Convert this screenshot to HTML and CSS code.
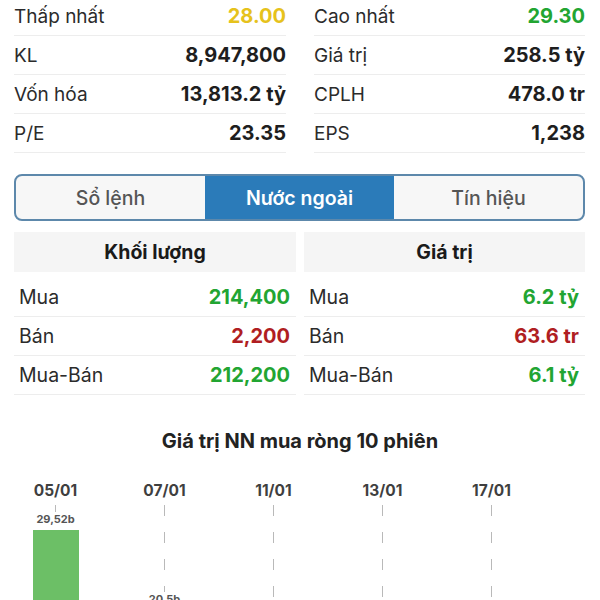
FILE: index.html
```html
<!DOCTYPE html>
<html lang="vi">
<head>
<meta charset="utf-8">
<link rel="stylesheet" href="styles.css">
</head>
<body>
<div class="page">
  <section class="stats">
    <div class="stat"><span class="lbl">Thấp nhất</span><span class="val yellow">28.00</span></div>
    <div class="stat"><span class="lbl">Cao nhất</span><span class="val green">29.30</span></div>
    <div class="stat"><span class="lbl">KL</span><span class="val">8,947,800</span></div>
    <div class="stat"><span class="lbl">Giá trị</span><span class="val">258.5 tỷ</span></div>
    <div class="stat"><span class="lbl">Vốn hóa</span><span class="val">13,813.2 tỷ</span></div>
    <div class="stat"><span class="lbl">CPLH</span><span class="val">478.0 tr</span></div>
    <div class="stat"><span class="lbl">P/E</span><span class="val">23.35</span></div>
    <div class="stat"><span class="lbl">EPS</span><span class="val">1,238</span></div>
  </section>

  <nav class="tabs">
    <div class="tab">Sổ lệnh</div>
    <div class="tab active">Nước ngoài</div>
    <div class="tab">Tín hiệu</div>
  </nav>

  <section class="tables">
    <div class="tbl">
      <div class="thead">Khối lượng</div>
      <div class="trow"><span class="lbl">Mua</span><span class="val green">214,400</span></div>
      <div class="trow"><span class="lbl">Bán</span><span class="val red">2,200</span></div>
      <div class="trow"><span class="lbl">Mua-Bán</span><span class="val green">212,200</span></div>
    </div>
    <div class="tbl">
      <div class="thead">Giá trị</div>
      <div class="trow"><span class="lbl">Mua</span><span class="val green">6.2 tỷ</span></div>
      <div class="trow"><span class="lbl">Bán</span><span class="val red">63.6 tr</span></div>
      <div class="trow"><span class="lbl">Mua-Bán</span><span class="val green">6.1 tỷ</span></div>
    </div>
  </section>

  <h2 class="chart-title">Giá trị NN mua ròng 10 phiên</h2>

  <section class="chart">
    <div class="col">
      <div class="date">05/01</div>
      <div class="plot">
        <div class="bar-group" style="margin-top:7px">
          <div class="bar-lbl">29,52b</div>
          <div class="bar" style="height:100px"></div>
        </div>
      </div>
    </div>
    <div class="col">
      <div class="date">07/01</div>
      <div class="plot">
        <div class="bar-group" style="margin-top:87px">
          <div class="bar-lbl">20,5b</div>
          <div class="bar" style="height:60px"></div>
        </div>
      </div>
    </div>
    <div class="col">
      <div class="date">11/01</div>
      <div class="plot"></div>
    </div>
    <div class="col">
      <div class="date">13/01</div>
      <div class="plot"></div>
    </div>
    <div class="col">
      <div class="date">17/01</div>
      <div class="plot"></div>
    </div>
  </section>
</div>
</body>
</html>
```
FILE: styles.css
```css
html, body {
  margin: 0;
  padding: 0;
  background: #ffffff;
}
body {
  height: 600px;
  overflow: hidden;
  font-family: Inter, "Noto Sans", "Liberation Sans", sans-serif;
  color: #2a2a2a;
}
.page {
  width: 600px;
}

/* top stats */
.stats {
  display: grid;
  grid-template-columns: 272px 271px;
  column-gap: 28px;
  padding: 0 15px 0 14px;
  margin-top: -3px;
}
.stat {
  display: flex;
  justify-content: space-between;
  align-items: center;
  height: 38px;
  border-bottom: 1px solid #ededed;
  font-size: 19px;
}
.lbl {
  color: #2b2b2b;
  font-weight: 400;
}
.val {
  font-weight: 700;
  font-size: 20px;
  color: #1e1e1e;
}
.yellow { color: #e6c21c; }
.green { color: #22a532; }
.red { color: #b01e22; }

/* tabs */
.tabs {
  display: grid;
  grid-template-columns: 1fr 1fr 1fr;
  margin: 21px 15px 0 14px;
  height: 47px;
  box-sizing: border-box;
  border: 2px solid #5d88ab;
  border-radius: 8px;
  overflow: hidden;
  background: #f7f7f7;
}
.tab {
  display: flex;
  align-items: center;
  justify-content: center;
  font-size: 19.5px;
  font-weight: 500;
  color: #555555;
  padding-top: 1px;
}
.tab.active {
  background: #2b7bb9;
  color: #ffffff;
  font-weight: 600;
}

/* tables */
.tables {
  display: grid;
  grid-template-columns: 282px 281px;
  column-gap: 8px;
  padding: 0 15px 0 14px;
  margin-top: 11px;
}
.thead {
  height: 40px;
  background: #f5f5f5;
  display: flex;
  align-items: center;
  justify-content: center;
  font-size: 19.5px;
  font-weight: 700;
  color: #1a1a1a;
  margin-bottom: 6px;
}
.trow {
  display: flex;
  justify-content: space-between;
  align-items: center;
  height: 38px;
  border-bottom: 1px solid #ededed;
  padding: 0 6px 0 5px;
  font-size: 19.5px;
}

/* chart */
.chart-title {
  margin: 34px 0 0;
  text-align: center;
  font-size: 20px;
  line-height: 24px;
  font-weight: 700;
  color: #222222;
}
.chart {
  display: grid;
  grid-template-columns: repeat(5, 109px);
  margin-top: 28px;
  padding-left: 1px;
}
.col {
  display: flex;
  flex-direction: column;
  align-items: center;
}
.date {
  font-size: 15.5px;
  line-height: 20px;
  font-weight: 700;
  color: #3f3f3f;
}
.plot {
  margin-top: 4px;
  width: 100%;
  height: 200px;
  display: flex;
  flex-direction: column;
  align-items: center;
  background-image: linear-gradient(to bottom, #b9b9b9 0, #b9b9b9 11px, transparent 11px, transparent 27px);
  background-size: 1px 27px;
  background-position: center top;
  background-repeat: repeat-y;
}
.bar-group {
  display: flex;
  flex-direction: column;
  align-items: center;
}
.bar-lbl {
  font-size: 11px;
  line-height: 14px;
  font-weight: 700;
  color: #555555;
  background: #ffffff;
  padding: 0 1px;
}
.bar {
  margin-top: 4px;
  width: 46px;
  background: #6cbf66;
}
```
